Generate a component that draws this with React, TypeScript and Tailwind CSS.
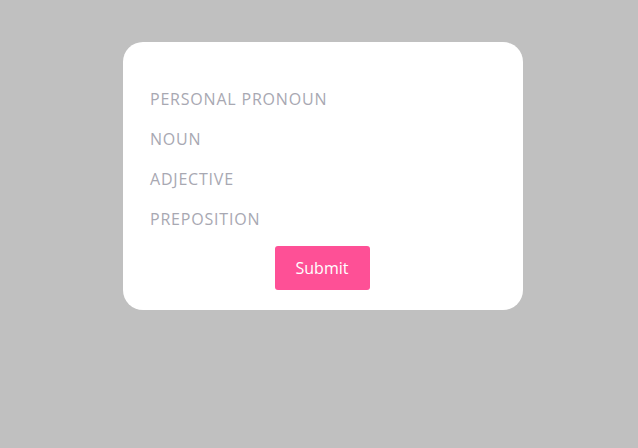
export default function App() {
  const labels = ['PERSONAL PRONOUN', 'NOUN', 'ADJECTIVE', 'PREPOSITION'];
  return (
    <div className="min-h-[448px] w-full bg-[#c0c0c0] pt-[42px] pl-[8px] font-['Open_Sans',sans-serif]">
      <div className="mx-auto w-[400px] rounded-[20px] bg-white pl-[27px] pr-[29px] pt-[37px] pb-[20px]">
        {labels.map((l) => (
          <div key={l} className="flex h-[40px] items-center text-[16px] tracking-[0.8px] text-[#a8a8b2]">
            {l}
          </div>
        ))}
        <div className="mt-[7px] flex justify-center">
          <button className="h-[44px] w-[95px] rounded-[3px] bg-[#fe5096] text-[16px] text-white">
            Submit
          </button>
        </div>
      </div>
    </div>
  );
}
